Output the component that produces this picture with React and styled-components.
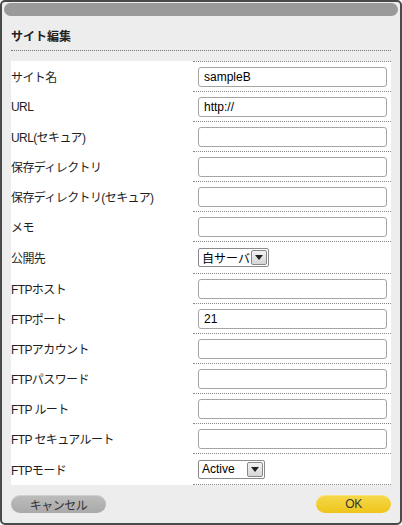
import React from 'react';
import styled, { createGlobalStyle } from 'styled-components';

const GlobalStyle = createGlobalStyle`
  html, body {
    margin: 0;
    padding: 0;
    background: #ffffff;
  }
  body {
    font-family: "Liberation Sans", "Noto Sans CJK JP", sans-serif;
    color: #222;
  }
`;

const Frame = styled.div`
  box-sizing: border-box;
  width: 402px;
  height: 525px;
  border: 2px solid #4a4a4a;
  border-radius: 5px;
  background: #ededed;
  padding: 1px 2px 0;
  display: flex;
  flex-direction: column;
`;

const TopBar = styled.div`
  height: 13px;
  border-radius: 7px;
  background: #9a9a9a;
`;

const Body = styled.div`
  padding: 0 7px;
  display: flex;
  flex-direction: column;
`;

const Title = styled.h2`
  margin: 0;
  height: 20px;
  padding-top: 14px;
  line-height: 14px;
  font-size: 12px;
  font-weight: bold;
  color: #222;
  border-bottom: 1px dotted #777;
`;

const Table = styled.div`
  margin-top: 10px;
  background: #fff;
  display: flex;
  flex-direction: column;
`;

const Row = styled.div`
  display: grid;
  grid-template-columns: 182px 198px;
  height: ${(p) => (p.$tall ? 32 : 30)}px;
`;

const Label = styled.div`
  display: flex;
  align-items: center;
  font-size: 12px;
  letter-spacing: -0.6px;
  color: #1e1e1e;
  padding-top: 1px;
`;

const Cell = styled.div`
  display: flex;
  align-items: center;
  padding-left: 5px;
  border-top: 1px dotted #888;
  border-bottom: ${(p) => (p.$last ? '1px dotted #888' : 'none')};
`;

const TextBox = styled.input`
  box-sizing: border-box;
  width: 189px;
  height: 20px;
  margin: 0;
  padding: 0 5px;
  border: 1px solid #a5a5a5;
  border-radius: 3px;
  background: #fff;
  font-family: "Liberation Sans", "Noto Sans CJK JP", sans-serif;
  font-size: 12px;
  color: #000;
  outline: none;
`;

const Select = styled.div`
  box-sizing: border-box;
  width: ${(p) => p.$width}px;
  height: 19px;
  border: 1px solid #8a8a8a;
  border-radius: 2px;
  background: #fff;
  display: flex;
  align-items: center;
`;

const SelectText = styled.span`
  flex: 1;
  padding-left: 3px;
  font-size: 12px;
  color: #000;
  white-space: nowrap;
`;

const Arrow = styled.span`
  box-sizing: border-box;
  width: 16px;
  height: 15px;
  margin-right: 1px;
  border: 1px solid #888;
  border-radius: 2px;
  background: linear-gradient(#f2f2f2, #d6d6d6);
  display: flex;
  align-items: center;
  justify-content: center;
`;

const Footer = styled.div`
  display: flex;
  justify-content: space-between;
  align-items: center;
  padding: 10px 7px 0;
`;

const PillButton = styled.button`
  box-sizing: border-box;
  width: ${(p) => p.$width}px;
  height: 18px;
  border: none;
  border-radius: 9px;
  padding: 0;
  font-family: "Liberation Sans", "Noto Sans CJK JP", sans-serif;
  font-size: 12px;
  letter-spacing: -0.5px;
  color: #333;
  background: ${(p) =>
    p.$primary
      ? 'linear-gradient(#f6d84a, #eec51c)'
      : 'linear-gradient(#bdbdbd, #a9a9a9)'};
  box-shadow: inset 0 1px 0 rgba(255, 255, 255, 0.3);
  cursor: pointer;
`;

const DownArrow = () => (
  <svg width="8" height="5" viewBox="0 0 8 5">
    <path d="M0 0 H8 L4 5 Z" fill="#222" />
  </svg>
);

const fields = [
  { label: 'サイト名', value: 'sampleB' },
  { label: 'URL', value: 'http://' },
  { label: 'URL(セキュア)', value: '' },
  { label: '保存ディレクトリ', value: '' },
  { label: '保存ディレクトリ(セキュア)', value: '' },
  { label: 'メモ', value: '' },
  { label: '公開先', select: '自サーバ', width: 71 },
  { label: 'FTPホスト', value: '' },
  { label: 'FTPポート', value: '21' },
  { label: 'FTPアカウント', value: '' },
  { label: 'FTPパスワード', value: '' },
  { label: 'FTP ルート', value: '' },
  { label: 'FTP セキュアルート', value: '' },
  { label: 'FTPモード', select: 'Active', width: 67 },
];

const App = () => {
  return (
    <>
      <GlobalStyle />
      <Frame>
        <TopBar />
        <Body>
          <Title>サイト編集</Title>
          <Table>
            {fields.map((f, i) => (
              <Row key={f.label} $tall={!!f.select}>
                <Label>{f.label}</Label>
                <Cell $last={i === fields.length - 1}>
                  {f.select ? (
                    <Select $width={f.width}>
                      <SelectText>{f.select}</SelectText>
                      <Arrow>
                        <DownArrow />
                      </Arrow>
                    </Select>
                  ) : (
                    <TextBox type="text" defaultValue={f.value} />
                  )}
                </Cell>
              </Row>
            ))}
          </Table>
        </Body>
        <Footer>
          <PillButton $width={95}>キャンセル</PillButton>
          <PillButton $width={75} $primary>OK</PillButton>
        </Footer>
      </Frame>
    </>
  );
};

export default App;
